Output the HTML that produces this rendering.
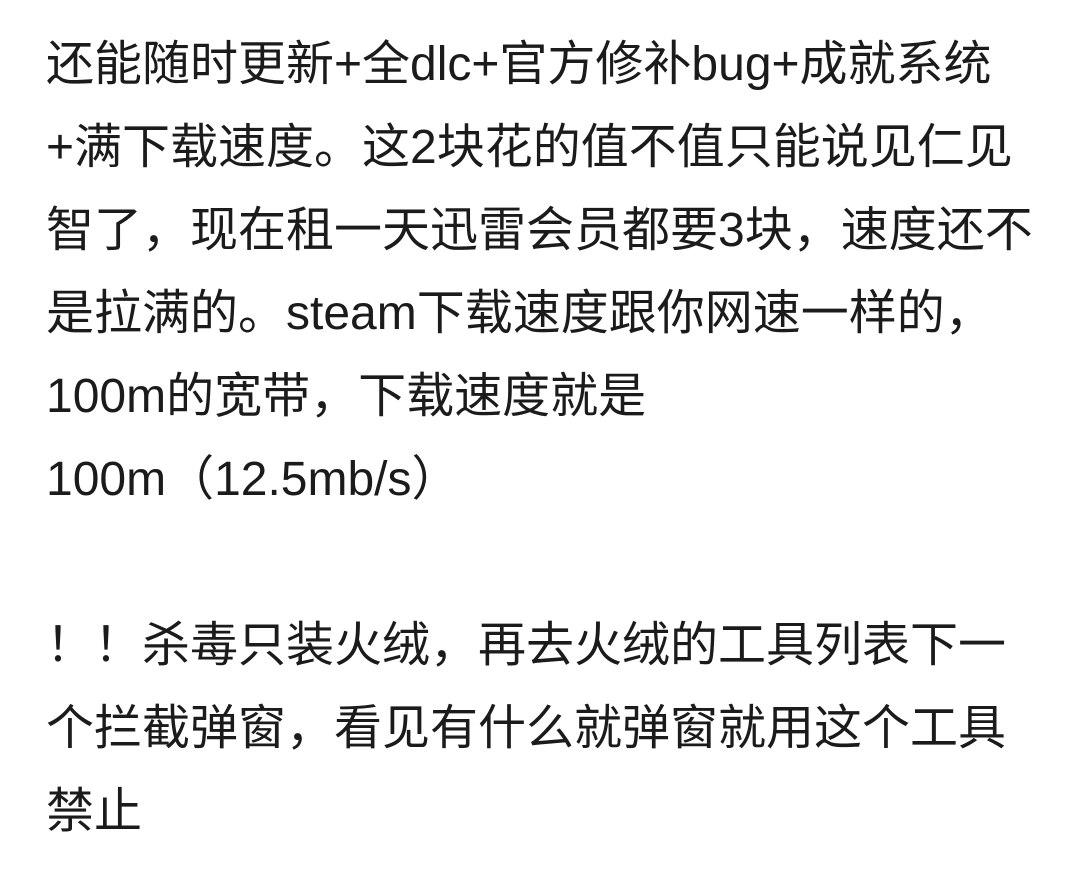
<!DOCTYPE html>
<html><head><meta charset="utf-8">
<style>
html,body{margin:0;padding:0;background:#fff;}
body{width:1080px;height:885px;overflow:hidden;}
.t{position:absolute;left:46px;top:23px;font-family:"Liberation Sans","Noto Sans CJK SC",sans-serif;font-size:48px;line-height:83px;color:#1b1b1b;white-space:nowrap;}
</style></head><body>
<div class="t">还能随时更新+全dlc+官方修补bug+成就系统<br>+满下载速度。这2块花的值不值只能说见仁见<br>智了，现在租一天迅雷会员都要3块，速度还不<br>是拉满的。steam下载速度跟你网速一样的，<br>100m的宽带，下载速度就是<br>100m（12.5mb/s）<br>&nbsp;<br>！！杀毒只装火绒，再去火绒的工具列表下一<br>个拦截弹窗，看见有什么就弹窗就用这个工具<br>禁止</div>
</body></html>
